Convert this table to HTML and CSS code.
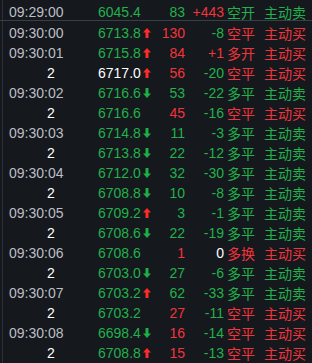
FILE: index.html
```html
<!DOCTYPE html>
<html lang="zh">
<head>
<meta charset="utf-8">
<link rel="stylesheet" href="styles.css">
</head>
<body>
<div class="panel">
  <div class="row head">
    <span class="time">09:29:00</span><span class="price g">6045.4</span><span class="vol g">83</span><span class="oi r">+443</span><span class="type g">空开</span><span class="dir g">主动卖</span>
  </div>
  <div class="rows">
    <div class="row"><span class="time">09:30:00</span><span class="price g">6713.8<svg class="arr" viewBox="0 0 8 10"><polygon class="up" points="4,0 8,4.5 5.5,4.5 5.5,10 2.5,10 2.5,4.5 0,4.5"/></svg></span><span class="vol r">130</span><span class="oi g">-8</span><span class="type r">空平</span><span class="dir r">主动买</span></div>
    <div class="row"><span class="time">09:30:01</span><span class="price g">6715.8<svg class="arr" viewBox="0 0 8 10"><polygon class="up" points="4,0 8,4.5 5.5,4.5 5.5,10 2.5,10 2.5,4.5 0,4.5"/></svg></span><span class="vol r">84</span><span class="oi r">+1</span><span class="type r">多开</span><span class="dir r">主动买</span></div>
    <div class="row"><span class="time sub">2</span><span class="price w">6717.0<svg class="arr" viewBox="0 0 8 10"><polygon class="up" points="4,0 8,4.5 5.5,4.5 5.5,10 2.5,10 2.5,4.5 0,4.5"/></svg></span><span class="vol r">56</span><span class="oi g">-20</span><span class="type r">空平</span><span class="dir r">主动买</span></div>
    <div class="row"><span class="time">09:30:02</span><span class="price g">6716.6<svg class="arr" viewBox="0 0 8 10"><polygon class="down" points="4,10 8,5.5 5.5,5.5 5.5,0 2.5,0 2.5,5.5 0,5.5"/></svg></span><span class="vol g">53</span><span class="oi g">-22</span><span class="type g">多平</span><span class="dir g">主动卖</span></div>
    <div class="row"><span class="time sub">2</span><span class="price g">6716.6</span><span class="vol r">45</span><span class="oi g">-16</span><span class="type r">空平</span><span class="dir r">主动买</span></div>
    <div class="row"><span class="time">09:30:03</span><span class="price g">6714.8<svg class="arr" viewBox="0 0 8 10"><polygon class="down" points="4,10 8,5.5 5.5,5.5 5.5,0 2.5,0 2.5,5.5 0,5.5"/></svg></span><span class="vol g">11</span><span class="oi g">-3</span><span class="type g">多平</span><span class="dir g">主动卖</span></div>
    <div class="row"><span class="time sub">2</span><span class="price g">6713.8<svg class="arr" viewBox="0 0 8 10"><polygon class="down" points="4,10 8,5.5 5.5,5.5 5.5,0 2.5,0 2.5,5.5 0,5.5"/></svg></span><span class="vol g">22</span><span class="oi g">-12</span><span class="type g">多平</span><span class="dir g">主动卖</span></div>
    <div class="row"><span class="time">09:30:04</span><span class="price g">6712.0<svg class="arr" viewBox="0 0 8 10"><polygon class="down" points="4,10 8,5.5 5.5,5.5 5.5,0 2.5,0 2.5,5.5 0,5.5"/></svg></span><span class="vol g">32</span><span class="oi g">-30</span><span class="type g">多平</span><span class="dir g">主动卖</span></div>
    <div class="row"><span class="time sub">2</span><span class="price g">6708.8<svg class="arr" viewBox="0 0 8 10"><polygon class="down" points="4,10 8,5.5 5.5,5.5 5.5,0 2.5,0 2.5,5.5 0,5.5"/></svg></span><span class="vol g">10</span><span class="oi g">-8</span><span class="type g">多平</span><span class="dir g">主动卖</span></div>
    <div class="row"><span class="time">09:30:05</span><span class="price g">6709.2<svg class="arr" viewBox="0 0 8 10"><polygon class="up" points="4,0 8,4.5 5.5,4.5 5.5,10 2.5,10 2.5,4.5 0,4.5"/></svg></span><span class="vol g">3</span><span class="oi g">-1</span><span class="type g">多平</span><span class="dir g">主动卖</span></div>
    <div class="row"><span class="time sub">2</span><span class="price g">6708.6<svg class="arr" viewBox="0 0 8 10"><polygon class="down" points="4,10 8,5.5 5.5,5.5 5.5,0 2.5,0 2.5,5.5 0,5.5"/></svg></span><span class="vol g">22</span><span class="oi g">-19</span><span class="type g">多平</span><span class="dir g">主动卖</span></div>
    <div class="row"><span class="time">09:30:06</span><span class="price g">6708.6</span><span class="vol r">1</span><span class="oi w">0</span><span class="type r">多换</span><span class="dir r">主动买</span></div>
    <div class="row"><span class="time sub">2</span><span class="price g">6703.0<svg class="arr" viewBox="0 0 8 10"><polygon class="down" points="4,10 8,5.5 5.5,5.5 5.5,0 2.5,0 2.5,5.5 0,5.5"/></svg></span><span class="vol g">27</span><span class="oi g">-6</span><span class="type g">多平</span><span class="dir g">主动卖</span></div>
    <div class="row"><span class="time">09:30:07</span><span class="price g">6703.2<svg class="arr" viewBox="0 0 8 10"><polygon class="up" points="4,0 8,4.5 5.5,4.5 5.5,10 2.5,10 2.5,4.5 0,4.5"/></svg></span><span class="vol g">62</span><span class="oi g">-33</span><span class="type g">多平</span><span class="dir g">主动卖</span></div>
    <div class="row"><span class="time sub">2</span><span class="price g">6703.2</span><span class="vol r">27</span><span class="oi g">-11</span><span class="type r">空平</span><span class="dir r">主动买</span></div>
    <div class="row"><span class="time">09:30:08</span><span class="price g">6698.4<svg class="arr" viewBox="0 0 8 10"><polygon class="down" points="4,10 8,5.5 5.5,5.5 5.5,0 2.5,0 2.5,5.5 0,5.5"/></svg></span><span class="vol r">16</span><span class="oi g">-14</span><span class="type r">空平</span><span class="dir r">主动买</span></div>
    <div class="row"><span class="time sub">2</span><span class="price g">6708.8<svg class="arr" viewBox="0 0 8 10"><polygon class="up" points="4,0 8,4.5 5.5,4.5 5.5,10 2.5,10 2.5,4.5 0,4.5"/></svg></span><span class="vol r">15</span><span class="oi g">-13</span><span class="type r">空平</span><span class="dir r">主动买</span></div>
  </div>
</div>
</body>
</html>
```
FILE: styles.css
```css
html, body {
  margin: 0;
  padding: 0;
  background: #15181d;
  width: 312px;
  height: 363px;
  overflow: hidden;
}
.panel {
  margin-left: 2px;
  border-left: 1px solid #2c3038;
  height: 363px;
  font-family: "Liberation Sans", "Noto Sans CJK SC", sans-serif;
  font-size: 14px;
}
.row {
  display: grid;
  grid-template-columns: 89px 60px 27px 39px 40px 1fr;
  grid-template-rows: 20px;
  box-sizing: border-box;
  height: 20px;
  padding-top: 2px;
  line-height: 20px;
  padding-left: 6px;
  white-space: nowrap;
}
.head {
  box-sizing: content-box;
  border-bottom: 1px solid #3a3e46;
  margin-left: -3px;
  padding-left: 9px;
  height: 18px;
  overflow: visible;
}
.time { color: #bcbfc5; }
.time.sub { color: #ffffff; padding-left: 38px; }
.price { display: flex; align-items: center; }
.vol, .oi { text-align: right; }
.type { padding-left: 3px; font-family: "Noto Sans CJK SC", sans-serif; }
.dir { font-family: "Noto Sans CJK SC", sans-serif; }
.arr { width: 8px; height: 10px; margin-left: 2px; }
.up { fill: #ff2a2a; }
.down { fill: #1fae45; }
.g { color: #22b14c; }
.r { color: #f2343b; }
.w { color: #ffffff; }
```
